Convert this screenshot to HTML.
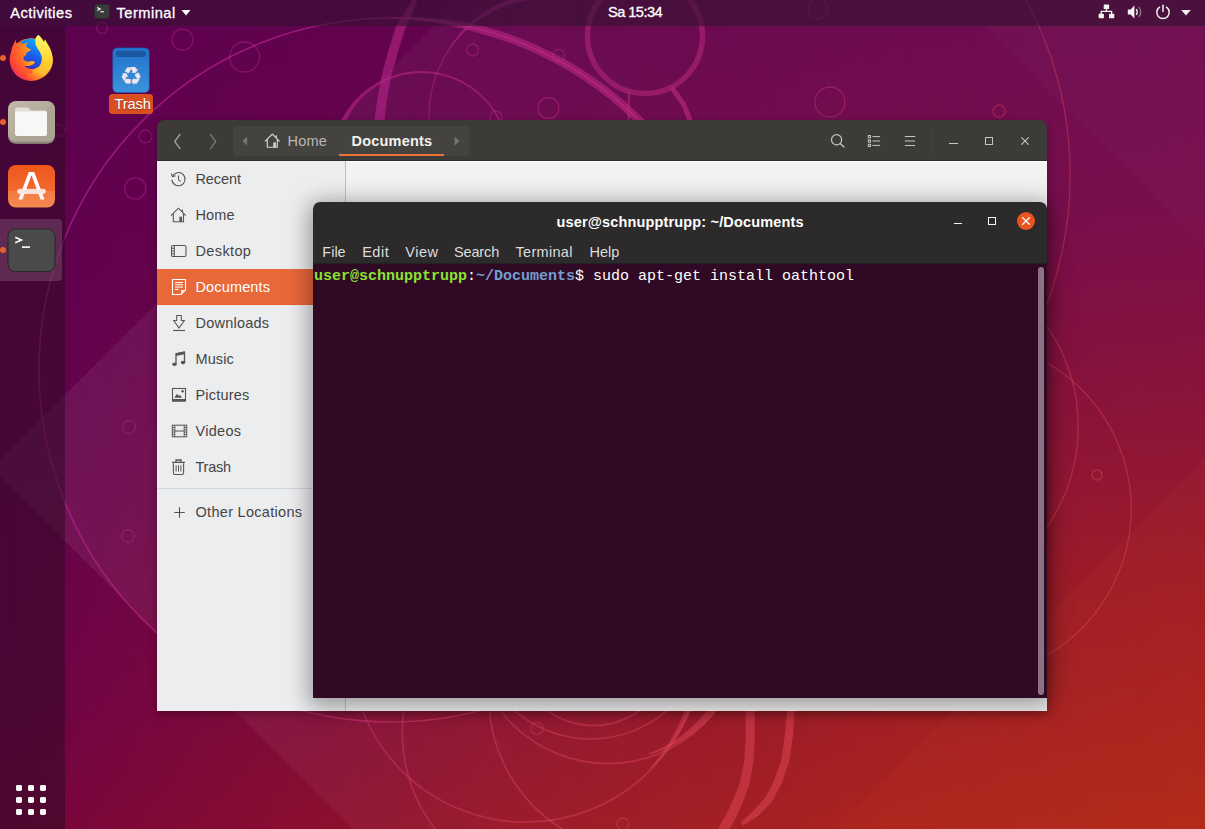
<!DOCTYPE html>
<html lang="en">
<head>
<meta charset="utf-8">
<title>Ubuntu Desktop</title>
<style>
*{box-sizing:border-box;margin:0;padding:0}
html,body{width:1205px;height:829px;overflow:hidden}
body{position:relative;font-family:"Liberation Sans",sans-serif;font-size:14.5px;color:#fff;
background:#5c0050}
.abs{position:absolute}
.t{position:absolute;white-space:nowrap;line-height:1}
#wall{position:absolute;left:0;top:0;width:1205px;height:829px;
background:linear-gradient(to bottom right,#5c0050 0%,#650651 25%,#740c4b 52%,#8c1536 74%,#a21d24 86%,#b82e18 100%)}
#topbar{position:absolute;left:0;top:0;width:1205px;height:26px;background:rgba(50,18,48,.6)}
#dock{position:absolute;left:0;top:26px;width:65px;height:803px;background:rgba(50,11,38,.58)}
.dot{position:absolute;left:-.5px;width:6px;height:6px;border-radius:3px;background:#e8602c}
.tb{font-size:14.6px;-webkit-text-stroke:.3px #fff}
/* files window */
#files{position:absolute;left:157px;top:120px;width:890px;height:591px;border-radius:7px 7px 0 0;background:transparent;box-shadow:0 3px 9px rgba(0,0,0,.3)}
#fhead{position:absolute;left:0;top:0;width:890px;height:41px;background:#3c3b38;border-radius:7px 7px 0 0}
#pathbar{position:absolute;left:76px;top:6px;width:237px;height:30px;background:#45433f;border-radius:4px}
#sidebar{position:absolute;left:0;top:41px;width:188px;height:550px;background:#ecedef;color:#4a4a4a}
#sdiv{position:absolute;left:188px;top:41px;width:1px;height:550px;background:#c0c0c0}
.srow{position:absolute;left:0;width:188px;height:36px}
.srow .t{left:38.5px;top:11px;font-size:14.5px;color:#454545}
.srow.sel{background:#e9683a;border-bottom:1px solid #ea5f2c}
.srow.sel .t{color:#fff}
/* terminal */
#term{position:absolute;left:313px;top:202px;width:734px;height:496px;border-radius:7px 7px 0 0;background:transparent;box-shadow:0 4px 22px 4px rgba(0,0,0,.37)}
#thead{position:absolute;left:0;top:0;width:734px;height:62px;background:#2c2a2b;border-radius:7px 7px 0 0}
#tbody{position:absolute;left:0;top:62px;width:734px;height:434px;background:#300a24}
.tm{color:#dcdcdc}
.mono{font-family:"Liberation Mono",monospace;font-size:15px}
</style>
</head>
<body>
<div id="wall"></div>
<!--WS--><svg class="abs" style="left:0;top:0" width="1205" height="829" viewBox="0 0 1205 829">
  <defs>
    <linearGradient id="lg" gradientUnits="userSpaceOnUse" x1="0" y1="0" x2="1205" y2="829"><stop offset="0" stop-color="#ae1e96"/><stop offset=".4" stop-color="#be2a80"/><stop offset=".62" stop-color="#d23c58"/><stop offset=".8" stop-color="#dc444c"/><stop offset="1" stop-color="#e85048"/></linearGradient>
    <linearGradient id="gl" x1="0" y1="0" x2="0" y2="1"><stop offset="0" stop-color="#5c0050"/><stop offset=".55" stop-color="#62024e"/><stop offset=".84" stop-color="#6c0348"/><stop offset="1" stop-color="#76043e"/></linearGradient>
    <linearGradient id="gr" x1="0" y1="0" x2="0" y2="1"><stop offset="0" stop-color="#6b064c"/><stop offset=".25" stop-color="#750847"/><stop offset=".5" stop-color="#890e33"/><stop offset=".72" stop-color="#9e1720"/><stop offset="1" stop-color="#b02213"/></linearGradient>
    <linearGradient id="hg" x1="0" y1="0" x2="1" y2="0"><stop offset="0" stop-color="#000"/><stop offset=".4" stop-color="#8c8c8c"/><stop offset=".74" stop-color="#e0e0e0"/><stop offset="1" stop-color="#fff"/></linearGradient>
    <mask id="hm" maskUnits="userSpaceOnUse" x="0" y="0" width="1205" height="829"><rect width="1205" height="829" fill="url(#hg)"/></mask>
    <linearGradient id="pg" gradientUnits="userSpaceOnUse" x1="0" y1="0" x2="700" y2="0"><stop offset="0" stop-color="#fff" stop-opacity=".07"/><stop offset=".6" stop-color="#fff" stop-opacity=".035"/><stop offset="1" stop-color="#fff" stop-opacity=".025"/></linearGradient>
  </defs>
  <rect width="1205" height="829" fill="url(#gl)"/>
  <rect width="1205" height="829" fill="url(#gr)" mask="url(#hm)"/>
  <polygon points="-8,468 460,0 1205,0 1205,829 353,829" fill="url(#pg)"/>
  <polygon points="1079,122 957,0 1205,0 1205,248" fill="#fff" fill-opacity=".02"/>
  <polygon points="834,829 1205,458 1205,829" fill="#ff9a40" fill-opacity=".035"/>
  <g fill="none" stroke="url(#lg)" stroke-opacity=".45" stroke-width="1.300">
    <circle cx="391" cy="370" r="352" stroke-opacity=".68" stroke-width="1.500"/>
    <path d="M983.9 -62.0 A368.7 368.7 0 0 1 983.9 412.0"/>
    <path d="M480.6 215.1 A121.0 121.0 0 0 1 450.9 46.6"/>
    <path d="M1006.1 345.8 A169.0 169.0 0 0 1 1006.1 672.2"/>
    <path d="M989.6 273.1 A177.3 177.3 0 0 1 989.6 580.1"/>
    <path d="M448.3 843.7 A156.6 156.6 0 0 1 411.8 679.4" stroke-width="1.800" stroke-opacity=".5"/>
    <path d="M577.7 837.1 A153.5 153.5 0 0 1 489.7 684.6" stroke-width="1.800" stroke-opacity=".5"/>
    <circle cx="525.7" cy="647" r="175.2" stroke-width="1.800" stroke-opacity=".5"/>
    <circle cx="608" cy="628" r="135.7" stroke-width="1.800" stroke-opacity=".5"/>
    <circle cx="590.7" cy="622" r="117" stroke-width="1.800" stroke-opacity=".5"/>
    <circle cx="593.5" cy="647.6" r="78" stroke-width="1.800" stroke-opacity=".5"/>
    <circle cx="818" cy="9" r="10"/>
    <circle cx="102" cy="28" r="5.5"/>
    <circle cx="182.4" cy="39.7" r="10.5"/>
    <circle cx="244.6" cy="57" r="15"/>
    <circle cx="472.6" cy="50" r="6"/>
    <circle cx="558.7" cy="55.4" r="6"/>
    <circle cx="548.5" cy="108" r="10.5"/>
    <circle cx="496" cy="117" r="6"/>
    <circle cx="537" cy="728.5" r="6"/>
    <circle cx="623" cy="824" r="6"/>
    <circle cx="830" cy="102" r="15"/>
    <circle cx="999" cy="111" r="6"/>
    <circle cx="129" cy="427" r="6.5"/>
    <circle cx="128" cy="536" r="6.5"/>
    <circle cx="145.5" cy="136.4" r="6.4"/>
    <circle cx="135.2" cy="188.5" r="10.6"/>
    <circle cx="59" cy="130.5" r="6"/>
    <circle cx="1097" cy="475" r="5"/>
  </g>
  <g fill="url(#lg)" fill-opacity=".58">
    <path d="M391.0 17.3 L397.0 17.1 L402.9 17.1 L408.9 17.1 L414.9 17.3 L420.9 17.5 L426.8 17.9 L432.8 18.3 L438.8 18.9 L444.7 19.5 L450.7 20.3 L456.6 21.2 L462.6 22.1 L468.5 23.2 L474.4 24.3 L480.3 25.6 L486.1 26.9 L484.0 34.7 L478.4 32.9 L472.7 31.3 L467.0 29.8 L461.3 28.3 L455.5 27.0 L449.8 25.7 L444.0 24.6 L438.2 23.5 L432.3 22.6 L426.5 21.7 L420.6 21.0 L414.7 20.3 L408.8 19.8 L402.9 19.3 L396.9 19.0 L391.0 18.7 Z"/>
    <path d="M485.5 26.8 L492.8 28.9 L500.1 31.1 L507.3 33.5 L514.4 36.0 L521.5 38.7 L528.5 41.6 L535.5 44.6 L542.4 47.7 L549.2 51.0 L556.0 54.4 L562.7 58.0 L569.3 61.7 L575.8 65.6 L582.2 69.6 L588.6 73.7 L594.9 78.0 L601.0 82.4 L607.1 86.9 L613.1 91.6 L619.0 96.4 L624.8 101.3 L630.4 106.3 L636.0 111.5 L641.5 116.7 L646.8 122.1 L652.0 127.6 L657.1 133.2 L662.1 138.9 L667.0 144.7 L671.7 150.7 L665.0 155.9 L660.4 150.1 L655.7 144.4 L650.8 138.8 L645.8 133.3 L640.8 128.0 L635.6 122.7 L630.2 117.5 L624.8 112.5 L619.3 107.6 L613.7 102.8 L607.9 98.1 L602.1 93.5 L596.2 89.1 L590.1 84.8 L584.0 80.6 L577.8 76.5 L571.5 72.6 L565.2 68.8 L558.7 65.2 L552.2 61.7 L545.6 58.3 L538.9 55.1 L532.2 52.0 L525.4 49.0 L518.5 46.3 L511.6 43.6 L504.6 41.1 L497.6 38.7 L490.5 36.5 L483.4 34.5 Z"/>
    <path d="M339.6 197.2 L336.9 190.5 L334.7 183.5 L333.2 176.4 L332.2 169.2 L331.7 161.9 L331.9 154.7 L332.7 147.5 L334.0 140.4 L335.9 133.4 L338.4 126.6 L341.4 120.1 L344.9 113.8 L348.9 107.8 L353.3 102.2 L358.2 97.0 L363.5 92.1 L369.1 87.8 L375.1 83.9 L381.4 80.5 L387.9 77.6 L394.6 75.2 L401.4 73.3 L408.4 72.0 L415.5 71.2 L422.6 71.0 L429.7 71.4 L436.7 72.3 L443.6 73.9 L450.4 75.9 L457.0 78.5 L463.4 81.7 L469.5 85.3 L475.2 89.4 L480.6 94.0 L485.7 99.0 L490.3 104.4 L494.5 110.1 L498.2 116.1 L501.3 122.4 L504.0 129.0 L502.7 129.5 L500.0 123.0 L496.9 116.9 L493.2 110.9 L489.1 105.3 L484.5 100.1 L479.5 95.2 L474.2 90.8 L468.5 86.8 L462.5 83.2 L456.3 80.2 L449.8 77.7 L443.1 75.7 L436.4 74.2 L429.5 73.3 L422.5 73.0 L415.6 73.2 L408.7 74.0 L401.9 75.3 L395.2 77.2 L388.7 79.6 L382.5 82.7 L376.5 86.2 L370.9 90.1 L365.6 94.5 L360.6 99.3 L356.1 104.5 L352.0 110.1 L348.4 115.9 L345.3 122.0 L342.7 128.3 L340.6 134.8 L339.0 141.4 L338.0 148.2 L337.5 155.0 L337.5 161.8 L338.2 168.5 L339.3 175.2 L341.0 181.7 L343.2 188.1 L345.9 194.3 Z"/>
    <path d="M450.3 46.2 L451.8 44.0 L453.4 41.8 L455.0 39.7 L456.6 37.6 L458.3 35.6 L460.0 33.5 L461.8 31.6 L463.6 29.6 L465.5 27.7 L467.4 25.8 L469.3 24.0 L471.3 22.2 L473.4 20.5 L475.4 18.8 L477.5 17.2 L479.7 15.6 L481.8 14.0 L484.1 12.5 L486.3 11.0 L488.6 9.6 L490.9 8.2 L493.2 6.9 L495.6 5.7 L498.0 4.5 L500.4 3.3 L502.9 2.2 L505.3 1.1 L507.8 0.1 L510.3 -0.8 L512.9 -1.7 L515.4 -2.5 L518.0 -3.3 L520.6 -4.1 L523.2 -4.7 L525.9 -5.3 L528.5 -5.9 L531.2 -6.4 L533.8 -6.8 L536.5 -7.2 L539.2 -7.5 L539.7 -1.6 L537.1 -1.4 L534.6 -1.1 L532.0 -0.8 L529.5 -0.4 L526.9 -0.0 L524.4 0.5 L521.9 1.0 L519.3 1.6 L516.8 2.2 L514.3 2.9 L511.9 3.7 L509.4 4.5 L507.0 5.3 L504.5 6.2 L502.1 7.2 L499.7 8.2 L497.4 9.3 L495.0 10.4 L492.7 11.6 L490.4 12.8 L488.2 14.1 L485.9 15.4 L483.7 16.8 L481.5 18.2 L479.4 19.7 L477.3 21.2 L475.2 22.8 L473.1 24.4 L471.1 26.0 L469.1 27.7 L467.2 29.5 L465.3 31.3 L463.4 33.1 L461.6 35.0 L459.8 36.9 L458.0 38.8 L456.3 40.8 L454.7 42.8 L453.0 44.9 L451.5 47.0 Z"/>
    <path d="M414.2 -2.9 L405.9 10.4 L396.6 24.7 L388.9 48.7 L382.1 73.9 L377.3 99.3 L374.0 123.4 L384.0 124.6 L386.7 100.7 L391.3 76.1 L398.1 51.3 L405.4 28.3 L412.1 13.6 L417.8 -1.1 Z"/>
    <path d="M717.0 710.1 L715.7 711.8 L714.3 713.3 L712.9 714.9 L711.5 716.4 L710.1 718.0 L708.7 719.4 L707.2 720.9 L705.7 722.4 L704.2 723.8 L702.7 725.2 L701.1 726.6 L699.5 727.9 L698.0 729.2 L696.3 730.5 L694.7 731.8 L693.1 733.1 L691.4 734.3 L689.7 735.5 L688.0 736.6 L686.3 737.8 L684.6 738.9 L682.8 740.0 L681.1 741.0 L679.3 742.1 L677.5 743.1 L675.7 744.1 L673.9 745.0 L672.0 745.9 L670.2 746.8 L668.3 747.7 L666.5 748.5 L664.6 749.3 L662.7 750.1 L660.8 750.8 L658.9 751.6 L656.9 752.2 L655.0 752.9 L653.1 753.5 L651.1 754.1 L649.2 754.7 L648.7 753.3 L650.6 752.6 L652.5 751.9 L654.3 751.1 L656.2 750.3 L658.0 749.5 L659.8 748.6 L661.6 747.8 L663.4 746.9 L665.2 745.9 L667.0 745.0 L668.7 744.0 L670.4 743.0 L672.1 741.9 L673.8 740.9 L675.5 739.8 L677.1 738.7 L678.8 737.5 L680.4 736.4 L682.0 735.2 L683.6 734.0 L685.1 732.7 L686.7 731.5 L688.2 730.2 L689.7 728.9 L691.2 727.6 L692.6 726.2 L694.1 724.9 L695.5 723.5 L696.9 722.1 L698.2 720.6 L699.6 719.2 L700.9 717.7 L702.2 716.2 L703.5 714.7 L704.7 713.2 L706.0 711.7 L707.2 710.1 L708.3 708.5 L709.5 706.9 L710.6 705.3 Z"/>
    <path d="M690.9 710.4 L690.2 712.1 L689.5 713.7 L688.8 715.3 L688.1 716.9 L687.3 718.5 L686.5 720.1 L685.7 721.7 L684.9 723.3 L684.1 724.8 L683.2 726.4 L682.4 728.0 L681.5 729.5 L680.6 731.0 L679.7 732.6 L678.8 734.1 L677.9 735.6 L676.9 737.1 L676.0 738.5 L675.0 740.0 L674.0 741.5 L673.0 742.9 L672.0 744.4 L671.0 745.8 L669.9 747.2 L668.9 748.6 L667.8 750.0 L666.7 751.4 L665.6 752.8 L664.5 754.2 L663.3 755.5 L662.2 756.9 L661.1 758.2 L659.9 759.5 L658.7 760.8 L657.5 762.1 L656.3 763.4 L655.1 764.6 L653.9 765.9 L652.6 767.1 L651.4 768.4 L650.4 767.4 L651.5 766.1 L652.7 764.8 L653.8 763.5 L654.9 762.1 L656.0 760.8 L657.1 759.4 L658.2 758.1 L659.3 756.7 L660.3 755.3 L661.3 753.9 L662.4 752.5 L663.4 751.1 L664.4 749.7 L665.3 748.3 L666.3 746.8 L667.2 745.4 L668.2 743.9 L669.1 742.5 L670.0 741.0 L670.9 739.5 L671.8 738.0 L672.6 736.5 L673.5 735.0 L674.3 733.5 L675.1 732.0 L675.9 730.4 L676.7 728.9 L677.4 727.3 L678.2 725.8 L678.9 724.2 L679.6 722.7 L680.3 721.1 L681.0 719.5 L681.7 717.9 L682.3 716.3 L683.0 714.7 L683.6 713.1 L684.2 711.5 L684.8 709.9 L685.3 708.3 Z"/>
    <path d="M745.5 709.1 L745.8 734.9 L744.5 759.5 L740.4 780.8 L733.9 798.1 L726.6 813.7 L718.1 828.5 L726.9 833.5 L735.4 818.3 L743.1 801.9 L749.6 783.2 L753.5 760.5 L754.8 735.1 L754.5 708.9 Z"/>
    <path d="M787.2 708.7 L785.0 734.6 L781.5 759.1 L774.3 780.4 L765.2 797.7 L752.6 811.4 L740.8 822.4 L743.2 825.6 L757.4 816.6 L771.6 802.3 L781.7 783.6 L789.3 760.9 L793.0 735.4 L794.8 709.3 Z"/>
    <path d="M628.1 92.0 L627.6 110.0 L627.6 130.0 L629.4 130.0 L629.4 110.0 L629.9 92.0 Z"/>
    <path d="M670.0 89.4 L681.8 106.2 L691.7 130.9 L696.3 129.1 L686.2 103.8 L674.0 86.6 Z"/>
    <circle cx="645" cy="36" r="57.500" fill="none" stroke="url(#lg)" stroke-opacity=".5" stroke-width="5.500"/>
  </g>
</svg><!--WE-->
<svg class="abs" style="left:112px;top:47px" width="38" height="46" viewBox="0 0 38 46">
  <defs><linearGradient id="trg" x1="0" y1="0" x2="0" y2="1"><stop offset="0" stop-color="#2173cc"/><stop offset="1" stop-color="#3c92da"/></linearGradient></defs>
  <rect x=".8" y=".9" width="36.400" height="44.600" rx="4.500" fill="url(#trg)" stroke="#1b5fae" stroke-width=".6"/>
  <rect x="3.900" y="3.800" width="30" height="6.100" rx="2.600" fill="#1a599f"/>
  <text x="19" y="38.300" text-anchor="middle" font-family="'DejaVu Sans',sans-serif" font-size="25.500" fill="#f1e6ee">♻</text>
</svg>
<div class="abs" style="left:109px;top:94px;width:44px;height:20px;border-radius:3.500px;background:#da4f22"></div>
<div class="t" id="dtrash" style="left:114.500px;top:96.500px;font-size:14.600px;letter-spacing:-.1px;text-shadow:0 1px 1px rgba(0,0,0,.35)">Trash</div>
<div id="dock">
  <div class="abs" style="left:0;top:193px;width:62px;height:62px;background:rgba(255,255,255,.14);border-radius:0 4px 4px 0"></div>
  <div class="dot" style="top:29px"></div>
  <div class="dot" style="top:93px"></div>
  <div class="dot" style="top:221px"></div>
  <!-- firefox -->
  <svg class="abs" style="left:8px;top:8px" width="47" height="48" viewBox="0 0 47 48">
    <defs>
      <radialGradient id="ffb" gradientUnits="userSpaceOnUse" cx="34" cy="14" r="40"><stop offset="0" stop-color="#ffd43a"/><stop offset=".3" stop-color="#ffa623"/><stop offset=".58" stop-color="#ff6d24"/><stop offset=".84" stop-color="#ff4136"/><stop offset=".95" stop-color="#ee2a72"/><stop offset="1" stop-color="#cc1e9e"/></radialGradient>
      <radialGradient id="ffy" gradientUnits="userSpaceOnUse" cx="43" cy="27" r="31"><stop offset="0" stop-color="#ffd83a"/><stop offset=".5" stop-color="#ffb828" stop-opacity=".97"/><stop offset="1" stop-color="#ff8a1c" stop-opacity="0"/></radialGradient>
      <linearGradient id="ffg" gradientUnits="userSpaceOnUse" x1="30" y1="5" x2="16" y2="35"><stop offset="0" stop-color="#12b0ff"/><stop offset=".45" stop-color="#1668ee"/><stop offset=".8" stop-color="#2d3fd0"/><stop offset="1" stop-color="#4a22a8"/></linearGradient>
      <linearGradient id="fft" gradientUnits="userSpaceOnUse" x1="32" y1="1" x2="32" y2="42"><stop offset="0" stop-color="#fff76a"/><stop offset=".45" stop-color="#ffe040"/><stop offset=".7" stop-color="#ffca30"/><stop offset="1" stop-color="#ffb828" stop-opacity="0"/></linearGradient>
      <linearGradient id="ffa" gradientUnits="userSpaceOnUse" x1="13" y1="30" x2="28" y2="27"><stop offset="0" stop-color="#ff6a20" stop-opacity="0"/><stop offset=".35" stop-color="#ff8a22"/><stop offset="1" stop-color="#ffc62c"/></linearGradient>
    </defs>
    <circle cx="23" cy="25.600" r="21.400" fill="url(#ffb)"/>
    <circle cx="23" cy="25.600" r="21.400" fill="url(#ffy)"/>
    <circle cx="22.600" cy="20" r="15.200" fill="url(#ffg)"/>
    <path d="M7.500 6 Q8.200 9 9.800 10.600 Q13 8.600 16.500 9.800 Q18.200 8.600 20 8.600 Q18.300 10.300 17.800 12.200 Q20.500 14.500 23.200 15.500 Q21 17.800 18.400 18.800 Q18.400 20.800 17.400 21.800 L15.200 23 Q15 25.200 16.400 26.400 Q19 28.200 22 27.600 Q24.800 26.900 27.200 28.300 Q25.600 30.300 23 31.200 Q19.500 32.600 16 31.600 Q20 35.600 26 35.300 L24 40 L8 36 L2.500 24 L3.800 14 Z" fill="url(#ffb)"/>
    <path d="M15.200 23 Q15 25.400 16.400 26.500 Q19 28.300 22 27.600 Q24.800 26.900 27.200 28.300 Q25.600 30.400 23 31.200 Q19.500 32.500 16 31.400 Q13.300 30 13 27 Q13.500 24.200 15.200 23 Z" fill="url(#ffa)"/>
    <path d="M30.500 .8 Q27 3.200 27.300 7 Q27.100 11.500 29.500 14.600 Q32.800 18.400 33.700 22.500 Q34.600 28 31 32.600 Q28 36 23.500 36.800 L27 46 Q34 46 39.500 40.500 Q45.500 33.500 44.800 24.500 Q44 16 39 9 Q38 6.600 36.500 5.300 Q36.600 7 36 8 Q33.800 3.600 30.500 .8 Z" fill="url(#fft)"/>
  </svg>
  <!-- files -->
  <svg class="abs" style="left:7px;top:74px" width="49" height="45" viewBox="0 0 49 45">
    <defs><linearGradient id="fig" x1="0" y1="0" x2="1" y2="1"><stop offset="0" stop-color="#c2bbab"/><stop offset=".5" stop-color="#b3ac9d"/><stop offset=".5" stop-color="#aea798"/><stop offset="1" stop-color="#aaa395"/></linearGradient></defs>
    <rect x="1" y="1" width="47" height="42.500" rx="8" fill="url(#fig)"/>
    <path d="M1.500 36 Q1.500 43.500 9 43.500 H40 Q47.500 43.500 47.500 36 V34 Q47.500 41.500 40 41.500 H9 Q1.500 41.500 1.500 34 Z" fill="#8f897c"/>
    <path d="M8 9.500 Q8 7.500 10 7.500 H20 Q21.500 7.500 22.500 8.800 L24 10.500 H38 Q40 10.500 40 12.500 V16 H8 Z" fill="#e4e0d8"/>
    <rect x="8" y="11.500" width="32" height="24.500" rx="2.200" fill="#f8f7f5"/>
  </svg>
  <!-- software -->
  <svg class="abs" style="left:7px;top:138px" width="49" height="45" viewBox="0 0 49 45">
    <defs><linearGradient id="swg" x1="0" y1="0" x2="0" y2="1"><stop offset="0" stop-color="#f0561c"/><stop offset=".6" stop-color="#f26a2e"/><stop offset=".62" stop-color="#f37a40"/><stop offset="1" stop-color="#f48a52"/></linearGradient></defs>
    <rect x="1" y="1" width="47" height="42.500" rx="8" fill="url(#swg)"/>
    <path d="M21.800 8 H27.200 L37.500 35.500 H33.600 L24.500 11.200 L15.400 35.500 H11.500 Z" fill="#fff"/>
    <rect x="10.500" y="25.300" width="28" height="4.200" rx="2.100" fill="#fbe3d9" stroke="#fff" stroke-width=".6"/>
  </svg>
  <!-- terminal -->
  <svg class="abs" style="left:7px;top:202px" width="49" height="45" viewBox="0 0 49 45">
    <rect x="1" y="1" width="47" height="42.500" rx="7.500" fill="#4a4a4a" stroke="#2b2b2b" stroke-width="1.200"/>
    <path d="M8.200 9.200 L14.500 12 L8.200 14.800" fill="none" stroke="#fff" stroke-width="1.500"/>
    <rect x="15" y="18.300" width="8" height="1.600" fill="#fff"/>
  </svg>
  <!-- grid -->
  <svg class="abs" style="left:16px;top:759px" width="31" height="31" viewBox="0 0 31 31"><g fill="#f7f7f7">
    <rect x="0" y="0" width="6" height="6" rx="1.400"/><rect x="12" y="0" width="6" height="6" rx="1.400"/><rect x="24" y="0" width="6" height="6" rx="1.400"/>
    <rect x="0" y="12" width="6" height="6" rx="1.400"/><rect x="12" y="12" width="6" height="6" rx="1.400"/><rect x="24" y="12" width="6" height="6" rx="1.400"/>
    <rect x="0" y="24" width="6" height="6" rx="1.400"/><rect x="12" y="24" width="6" height="6" rx="1.400"/><rect x="24" y="24" width="6" height="6" rx="1.400"/></g></svg>
</div>
<div id="topbar">
  <div class="t tb" id="act" style="left:10.3px;top:5.6px;letter-spacing:.45px">Activities</div>
  <svg class="abs" style="left:94px;top:4px" width="16" height="15" viewBox="0 0 16 15"><rect x=".5" y=".5" width="15" height="14" rx="2.5" fill="#3b3b3b" stroke="#2a2a2a"/><path d="M3.2 3.6 L6.2 5 L3.2 6.4" fill="none" stroke="#fff" stroke-width="1.1"/><rect x="6.4" y="7.2" width="3.4" height="1.1" fill="#fff"/></svg>
  <div class="t tb" id="tmenu" style="left:116.500px;top:5.6px;letter-spacing:.5px">Terminal</div>
  <svg class="abs" style="left:181px;top:10px" width="10" height="6" viewBox="0 0 10 6"><path d="M.5 0 H9.5 L5 5.4 Z" fill="#fff"/></svg>
  <div class="t tb" id="clock" style="left:608px;top:5px;letter-spacing:-.55px">Sa 15:34</div>
  <svg class="abs" style="left:1098px;top:4px" width="17" height="15" viewBox="0 0 17 15"><g fill="#f2f2f2"><rect x="5.7" y=".5" width="5.4" height="4.6" rx=".6"/><rect x=".6" y="9.8" width="5.3" height="4.4" rx=".6"/><rect x="11" y="9.8" width="5.3" height="4.4" rx=".6"/></g><path d="M8.4 5 V7.4 M3.2 10 V7.4 H13.6 V10" fill="none" stroke="#f2f2f2" stroke-width="1.3"/></svg>
  <svg class="abs" style="left:1127px;top:5px" width="16" height="14" viewBox="0 0 16 14"><path d="M.8 4.500 H3.600 L7.400 .5 V13.500 L3.600 9.500 H.8 Z" fill="#f2f2f2"/><path d="M9.300 4 Q11.200 7 9.300 10" fill="none" stroke="#f2f2f2" stroke-width="1.300"/><path d="M12 2 Q15.400 7 12 12" fill="none" stroke="#f2f2f2" stroke-opacity=".5" stroke-width="1.100"/></svg>
  <svg class="abs" style="left:1155px;top:3.600px" width="16" height="16" viewBox="0 0 16 16"><path d="M4.600 3.200 A6.200 6.200 0 1 0 11.400 3.200" fill="none" stroke="#f2f2f2" stroke-width="1.500" stroke-linecap="round"/><path d="M8 1.300 V7.600" stroke="#f2f2f2" stroke-width="1.500" stroke-linecap="round"/></svg>
  <svg class="abs" style="left:1181px;top:10px" width="10" height="6" viewBox="0 0 10 6"><path d="M.2 0 H9.8 L5 5.4 Z" fill="#f2f2f2"/></svg>
</div>

<div id="files">
  <div id="fhead">
    <svg class="abs" style="left:14px;top:12px" width="14" height="18" viewBox="0 0 14 18"><path d="M9.300 2 L3.700 9.500 L9.300 17" fill="none" stroke="#a3a29d" stroke-width="1.300"/></svg>
    <svg class="abs" style="left:49px;top:12px" width="14" height="18" viewBox="0 0 14 18"><path d="M4.200 2 L9.800 9.500 L4.200 17" fill="none" stroke="#77766f" stroke-width="1.300"/></svg>
    <div id="pathbar"></div>
    <svg class="abs" style="left:85px;top:16px" width="6" height="10" viewBox="0 0 6 10"><path d="M5.200 .6 V9.400 L.4 5 Z" fill="#76756f"/></svg>
    <svg class="abs" style="left:107px;top:13px" width="17" height="15" viewBox="0 0 17 15"><path d="M1 8.300 L8.300 1 L15.600 8.300 M3.300 6.400 V14.200 H13.300 V6.400 M12.300 2.200 V4.800" fill="none" stroke="#d6d5d1" stroke-width="1.150"/><rect x="9.300" y="9.400" width="2.600" height="4.800" fill="#d6d5d1"/></svg>
    <div class="t" id="phome" style="left:130.500px;top:14px;color:#b9b8b3;letter-spacing:.25px">Home</div>
    <div class="t" id="pdocs" style="left:194.500px;top:14px;font-weight:bold;color:#f1f0ee;letter-spacing:.2px">Documents</div>
    <div class="abs" style="left:182px;top:34px;width:105px;height:2px;background:#f0703a"></div>
    <svg class="abs" style="left:297px;top:16px" width="6" height="10" viewBox="0 0 6 10"><path d="M.6 .6 V9.400 L5.400 5 Z" fill="#76756f"/></svg>
    <svg class="abs" style="left:672px;top:13px" width="18" height="18" viewBox="0 0 18 18"><circle cx="7.600" cy="6.800" r="5.100" fill="none" stroke="#c6c5c1" stroke-width="1.200"/><path d="M11.200 10.500 L15.300 14.200" stroke="#c6c5c1" stroke-width="1.500"/></svg>
    <svg class="abs" style="left:710px;top:14px" width="15" height="14" viewBox="0 0 15 14"><g fill="none" stroke="#c6c5c1" stroke-width="1"><rect x="1.300" y="1.500" width="2.200" height="2.200"/><rect x="1.300" y="5.900" width="2.200" height="2.200"/><rect x="1.300" y="10.300" width="2.200" height="2.200"/><path d="M5.400 2.600 H13.100 M5.400 7 H13.100 M5.400 11.400 H13.100"/></g></svg>
    <svg class="abs" style="left:747px;top:14px" width="12" height="14" viewBox="0 0 12 14"><path d="M.8 2.500 H11.200 M.8 7 H11.200 M.8 11.500 H11.200" stroke="#c6c5c1" stroke-width="1.100"/></svg>
    <div class="abs" style="left:774px;top:9px;width:1px;height:24px;background:#454440"></div>
    <div class="abs" style="left:792px;top:23px;width:9px;height:1px;background:#c6c5c1"></div>
    <div class="abs" style="left:828px;top:17px;width:8px;height:8px;border:1px solid #c6c5c1"></div>
    <svg class="abs" style="left:864px;top:17px" width="8" height="8" viewBox="0 0 8 8"><path d="M.3 .3 L7.700 7.700 M7.700 .3 L.3 7.700" stroke="#c6c5c1" stroke-width="1.100"/></svg>
  </div>
  <div id="sidebar">
    <div class="srow" style="top:0"><svg class="abs" style="left:13px;top:10px" width="17" height="17" viewBox="0 0 17 17"><path d="M2.600 5.200 A6.600 6.600 0 1 1 1.900 8.600" fill="none" stroke="#555" stroke-width="1.050"/><path d="M1.300 2.300 L2.400 5.600 L5.700 4.700" fill="none" stroke="#555" stroke-width="1.050"/><path d="M8.500 4.400 V8.600 L10.600 10.700" fill="none" stroke="#555" stroke-width="1.050"/></svg><div class="t" style="letter-spacing:-0.10px">Recent</div></div>
    <div class="srow" style="top:36px"><svg class="abs" style="left:13px;top:10px" width="17" height="16" viewBox="0 0 17 16"><path d="M1 8.600 L8.400 1.200 L15.800 8.600 M3.300 6.600 V14.700 H13.500 V6.600 M12.400 2.400 V5" fill="none" stroke="#555" stroke-width="1.100"/><rect x="9.400" y="9.700" width="2.600" height="5" fill="#555"/></svg><div class="t" style="letter-spacing:0.13px">Home</div></div>
    <div class="srow" style="top:72px"><svg class="abs" style="left:13px;top:11px" width="17" height="14" viewBox="0 0 17 14"><rect x="1.500" y="1.500" width="14.500" height="11" rx="1.600" fill="none" stroke="#555" stroke-width="1.050"/><path d="M4.300 1.500 V12.500 M1.500 4.300 H4.300 M1.500 7 H4.300 M1.500 9.700 H4.300" stroke="#555" stroke-width="1"/></svg><div class="t" style="letter-spacing:0.37px">Desktop</div></div>
    <div class="srow sel" style="top:108px"><svg class="abs" style="left:14px;top:9px" width="16" height="18" viewBox="0 0 16 18"><path d="M1.500 1.500 H14.500 V12 L10 16.500 H1.500 Z" fill="none" stroke="#fff" stroke-width="1.100"/><path d="M14.500 12 H10 V16.500 Z" fill="#fff" fill-opacity=".8"/><path d="M4 4.500 H12 M4 6.800 H12 M4 9.100 H12 M4 11.400 H7.500" stroke="#fff" stroke-width="1"/></svg><div class="t" style="letter-spacing:0.14px">Documents</div></div>
    <div class="srow" style="top:144px"><svg class="abs" style="left:15px;top:9px" width="14" height="18" viewBox="0 0 14 18"><path d="M4.700 1.500 H9.300 V6.500 H12.300 L7 14 L1.700 6.500 H4.700 Z" fill="none" stroke="#555" stroke-width="1.050"/><path d="M1 16.500 H13" stroke="#555" stroke-width="1.100"/></svg><div class="t" style="letter-spacing:0.22px">Downloads</div></div>
    <div class="srow" style="top:180px"><svg class="abs" style="left:15px;top:10px" width="14" height="16" viewBox="0 0 14 16"><path d="M4 12.800 V2.800 L12.500 1 V11.200" fill="none" stroke="#555" stroke-width="1.300"/><path d="M4 2.300 L12.500 .6 V3.300 L4 5 Z" fill="#555"/><ellipse cx="2.500" cy="13.200" rx="2.200" ry="1.800" fill="#555"/><ellipse cx="11" cy="11.600" rx="2.200" ry="1.800" fill="#555"/></svg><div class="t" style="letter-spacing:0.08px">Music</div></div>
    <div class="srow" style="top:216px"><svg class="abs" style="left:14px;top:10px" width="16" height="16" viewBox="0 0 16 16"><rect x="1.500" y="1.500" width="13" height="12.500" fill="none" stroke="#555" stroke-width="1.100"/><rect x="1.500" y="12" width="13" height="2.500" fill="#555"/><path d="M3.300 10.800 L6 6.800 L7.800 9 L9 7.700 L11 10.800 Z" fill="#555"/><circle cx="11.600" cy="4.300" r="1.200" fill="#555"/></svg><div class="t" style="letter-spacing:0.18px">Pictures</div></div>
    <div class="srow" style="top:252px"><svg class="abs" style="left:14px;top:11px" width="17" height="14" viewBox="0 0 17 14"><rect x="1.300" y="1.200" width="14.400" height="11.600" fill="none" stroke="#555" stroke-width="1"/><path d="M3.800 1.200 V12.800 M13.200 1.200 V12.800 M3.800 7 H13.200" stroke="#555" stroke-width="1"/><path d="M1.300 3.500 H3.800 M1.300 5.800 H3.800 M1.300 8.100 H3.800 M1.300 10.400 H3.800 M13.200 3.500 H15.700 M13.200 5.800 H15.700 M13.200 8.100 H15.700 M13.200 10.400 H15.700" stroke="#555" stroke-width=".9"/></svg><div class="t" style="letter-spacing:0.28px">Videos</div></div>
    <div class="srow" style="top:288px"><svg class="abs" style="left:14px;top:9px" width="15" height="18" viewBox="0 0 15 18"><path d="M2.400 5.300 V15 Q2.400 16.500 3.900 16.500 H11.100 Q12.600 16.500 12.600 15 V5.300" fill="none" stroke="#555" stroke-width="1.100"/><path d="M1 4.300 H14 M5 4 V2 H10 V4" fill="none" stroke="#555" stroke-width="1.300"/><path d="M5.100 7.300 V13.500 M7.500 7.300 V13.500 M9.900 7.300 V13.500" stroke="#555" stroke-width="1"/></svg><div class="t" style="letter-spacing:-0.26px">Trash</div></div>
    <div class="srow" style="top:333px"><svg class="abs" style="left:16px;top:12px" width="13" height="13" viewBox="0 0 13 13"><path d="M6.500 1.200 V11.800 M1.200 6.500 H11.800" stroke="#555" stroke-width="1.100"/></svg><div class="t" style="letter-spacing:0.30px">Other Locations</div></div>
  </div>
  <div class="abs" style="left:0;top:368px;width:188px;height:1px;background:#d3d6da"></div>
  <div id="sdiv"></div>
  <div class="abs" style="left:189px;top:41px;width:701px;height:550px;background:#f2f2f2;border-top:1px solid #fff"></div>
  <div class="abs" style="left:0;top:40px;width:890px;height:1px;background:#2f2e2b"></div>
</div>

<div id="term">
  <div id="thead">
    <div class="t" id="ttitle" style="left:243.600px;top:12.5px;font-weight:bold;letter-spacing:.15px">user@schnupptrupp: ~/Documents</div>
    <div class="t tm" style="left:9.300px;top:43px">File</div>
    <div class="t tm" style="left:49.200px;top:43px;letter-spacing:.5px">Edit</div>
    <div class="t tm" style="left:92.200px;top:43px;letter-spacing:.55px">View</div>
    <div class="t tm" style="left:141px;top:43px;letter-spacing:-.15px">Search</div>
    <div class="t tm" style="left:202.500px;top:43px;letter-spacing:.3px">Terminal</div>
    <div class="t tm" style="left:276.500px;top:43px">Help</div>
    <div class="abs" style="left:641px;top:21px;width:8px;height:1px;background:#f4f4f4"></div>
    <div class="abs" style="left:675px;top:15px;width:8.200px;height:8.200px;border:1.150px solid #f4f4f4"></div>
    <div class="abs" style="left:703.600px;top:9.500px;width:18.500px;height:18.500px;border-radius:50%;background:#e95420"></div>
    <svg class="abs" style="left:708.800px;top:14.700px" width="8" height="8" viewBox="0 0 8 8"><path d="M.3 .3 L7.700 7.700 M7.700 .3 L.3 7.700" stroke="#fff" stroke-width="1.300"/></svg>
  </div>
  <div class="abs" style="left:0;top:61px;width:734px;height:1px;background:#222122"></div>
  <div id="tbody">
    <div class="abs" style="left:725px;top:3px;width:6px;height:428px;border-radius:3px;background:#8c7384"></div>
    <div class="t mono" id="cmd" style="left:1px;top:5px"><b style="color:#8ae234">user@schnupptrupp</b>:<b style="color:#729fcf">~/Documents</b>$ sudo apt-get install oathtool</div>
  </div>
</div>
</body>
</html>
